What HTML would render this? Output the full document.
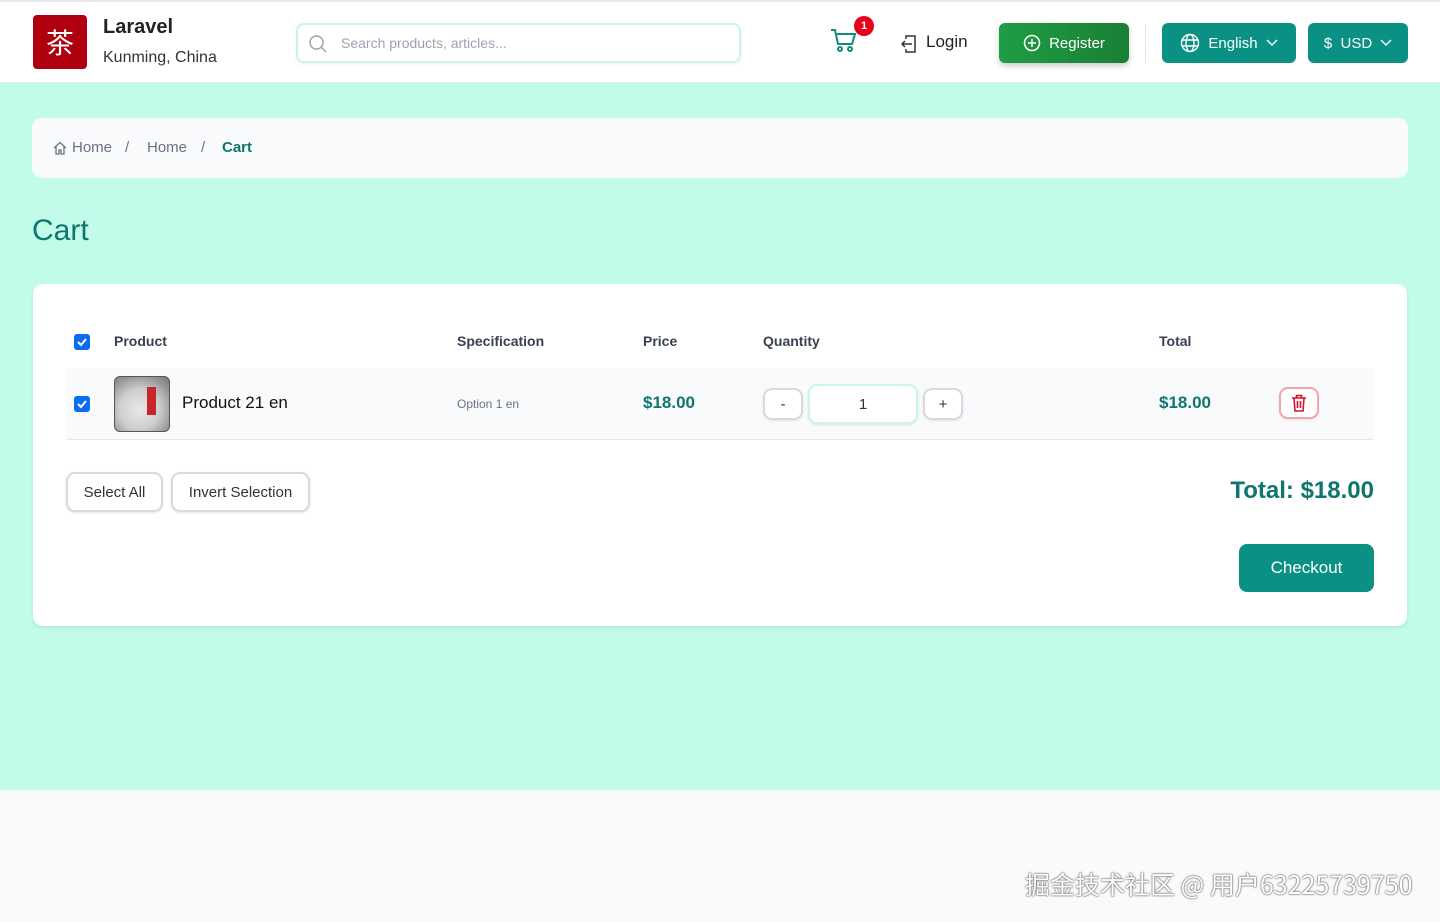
<!DOCTYPE html>
<html><head><meta charset="utf-8"><style>
*{box-sizing:border-box;margin:0;padding:0}
body{width:1440px;height:922px;font-family:"Liberation Sans","DejaVu Sans",sans-serif;background:#f8fafc;position:relative;overflow:hidden;color:#1f2937}
.hdr{position:absolute;top:0;left:0;width:1440px;height:83px;background:#fff;border-top:2px solid #e5e7eb;border-bottom:1px solid #d9f5ee}
.main{position:absolute;top:83px;left:0;width:1440px;height:707px;background:#c3fbeb}
.abs{position:absolute;white-space:nowrap}
.btn{position:absolute;border-radius:6px;color:#fff;font-size:15px;display:flex;align-items:center;justify-content:center;gap:8px}
.card{position:absolute;left:33px;top:284px;width:1374px;height:342px;background:#fff;border-radius:10px;box-shadow:0 2px 4px rgba(0,0,0,.08)}
.th{position:absolute;top:333px;font-size:14px;font-weight:bold;color:#374151}
.cb{position:absolute;width:16px;height:16px;background:#0a6cf2;border-radius:3px}
.cb svg{position:absolute;left:2px;top:2px}
.wb{position:absolute;background:#fff;border:2px solid #d8dadd;border-radius:9px;font-size:15px;display:flex;align-items:center;justify-content:center;color:#333;box-shadow:0 1px 2px rgba(0,0,0,.1)}
</style></head><body>
<div class="hdr">
 <div class="abs" style="left:33px;top:13px;width:54px;height:54px;background:#b00010;border-radius:4px;color:#fff;font-size:28px;font-family:'Noto Sans CJK SC',sans-serif;display:flex;align-items:center;justify-content:center">茶</div>
 <div class="abs" style="left:103px;top:14px;font-size:20px;font-weight:bold;color:#222">Laravel</div>
 <div class="abs" style="left:103px;top:47px;font-size:16px;color:#333">Kunming, China</div>
 <div class="abs" style="left:296px;top:21px;width:445px;height:40px;border:2px solid #c9f5e8;border-radius:8px;box-shadow:0 1px 3px rgba(0,0,0,.08)">
  <svg class="abs" style="left:10px;top:9px" width="20" height="20" viewBox="0 0 20 20" fill="none" stroke="#9ca3af" stroke-width="1.5"><circle cx="8.5" cy="8.5" r="6.5"/><path d="M13.5 13.5L18 18"/></svg>
  <div class="abs" style="left:43px;top:10px;font-size:14px;color:#9ca3af">Search products, articles...</div>
 </div>
 <svg class="abs" style="left:830px;top:26px" width="28" height="26" viewBox="0 0 28 26" fill="none" stroke="#0f8a7e" stroke-width="2"><path d="M1 2h4l3 14h14l3-10H7"/><circle cx="10" cy="21" r="2"/><circle cx="20" cy="21" r="2"/></svg>
 <div class="abs" style="left:854px;top:14px;width:20px;height:20px;border-radius:50%;background:#e5001c;color:#fff;font-size:11px;font-weight:bold;display:flex;align-items:center;justify-content:center">1</div>
 <svg class="abs" style="left:900px;top:32px" width="18" height="20" viewBox="0 0 18 20" fill="none" stroke="#333" stroke-width="1.5"><path d="M6 5V2h9v16H6v-3"/><path d="M12 10H2m3-3l-3 3 3 3"/></svg>
 <div class="abs" style="left:926px;top:30px;font-size:17px;color:#222">Login</div>
 <div class="btn" style="left:999px;top:21px;width:130px;height:40px;background:linear-gradient(90deg,#1f9d44,#1a7f35);box-shadow:0 3px 6px rgba(0,0,0,.2)"><svg width="18" height="18" viewBox="0 0 18 18" fill="none" stroke="#fff" stroke-width="1.5"><circle cx="9" cy="9" r="7.5"/><path d="M9 5v8M5 9h8"/></svg>Register</div>
 <div class="abs" style="left:1145px;top:22px;width:1px;height:40px;background:#e5e7eb"></div>
 <div class="btn" style="left:1162px;top:21px;width:134px;height:40px;background:#0a9184"><svg width="20" height="20" viewBox="0 0 20 20" fill="none" stroke="#fff" stroke-width="1.4"><circle cx="10" cy="10" r="8.5"/><ellipse cx="10" cy="10" rx="4" ry="8.5"/><path d="M2 7h16M2 13h16"/></svg>English <svg width="12" height="8" viewBox="0 0 12 8" fill="none" stroke="#fff" stroke-width="1.4"><path d="M1 1l5 5 5-5"/></svg></div>
 <div class="btn" style="left:1308px;top:21px;width:100px;height:40px;background:#0a9184">$&nbsp; USD <svg width="12" height="8" viewBox="0 0 12 8" fill="none" stroke="#fff" stroke-width="1.4"><path d="M1 1l5 5 5-5"/></svg></div>
</div>
<div class="main">
 <div class="abs" style="left:32px;top:35px;width:1376px;height:60px;background:#f8fafc;border-radius:10px"></div>
 <svg class="abs" style="left:53px;top:58px" width="14" height="14" viewBox="0 0 14 14" fill="none" stroke="#6b7280" stroke-width="1.3"><path d="M1 7L7 1.5 13 7M3 5.5V13h3V9h2v4h3V5.5"/></svg>
 <div class="abs" style="left:72px;top:56px;font-size:15px;color:#6b7280">Home</div>
 <div class="abs" style="left:125px;top:56px;font-size:15px;color:#6b7280">/</div>
 <div class="abs" style="left:147px;top:56px;font-size:15px;color:#6b7280">Home</div>
 <div class="abs" style="left:201px;top:56px;font-size:15px;color:#6b7280">/</div>
 <div class="abs" style="left:222px;top:56px;font-size:15px;color:#0f766e;font-weight:bold">Cart</div>
 <div class="abs" style="left:32px;top:131px;font-size:30px;color:#0f766e">Cart</div>
</div>
<div class="card"></div>
<div class="cb" style="left:74px;top:334px"><svg width="12" height="12" viewBox="0 0 12 12" fill="none" stroke="#fff" stroke-width="2"><path d="M2 6l3 3 5-6"/></svg></div>
<div class="th" style="left:114px">Product</div>
<div class="th" style="left:457px">Specification</div>
<div class="th" style="left:643px">Price</div>
<div class="th" style="left:763px">Quantity</div>
<div class="th" style="left:1159px">Total</div>
<div class="abs" style="left:66px;top:368px;width:1308px;height:72px;background:#f8fafc;border-bottom:1px solid #e5e7eb"></div>
<div class="cb" style="left:74px;top:396px"><svg width="12" height="12" viewBox="0 0 12 12" fill="none" stroke="#fff" stroke-width="2"><path d="M2 6l3 3 5-6"/></svg></div>
<div class="abs" style="left:114px;top:376px;width:56px;height:56px;border-radius:6px;border:1px solid #555;background:radial-gradient(circle at 45% 60%,#e8e8e8 0,#cfcfcf 45%,#9a9a9a 75%,#777 100%)"><div class="abs" style="left:32px;top:10px;width:9px;height:28px;background:#c8262a"></div></div>
<div class="abs" style="left:182px;top:393px;font-size:17px;color:#111">Product 21 en</div>
<div class="abs" style="left:457px;top:397px;font-size:12px;color:#6b7280">Option 1 en</div>
<div class="abs" style="left:643px;top:393px;font-size:17px;font-weight:bold;color:#0f766e">$18.00</div>
<div class="wb" style="left:763px;top:388px;width:40px;height:32px">-</div>
<div class="wb" style="left:808px;top:384px;width:110px;height:40px;border-color:#cbf5e9">1</div>
<div class="wb" style="left:923px;top:388px;width:40px;height:32px">+</div>
<div class="abs" style="left:1159px;top:393px;font-size:17px;font-weight:bold;color:#0f766e">$18.00</div>
<div class="wb" style="left:1279px;top:387px;width:40px;height:32px;border-color:#f3a6ad"><svg width="16" height="18" viewBox="0 0 16 18" fill="none" stroke="#d3132c" stroke-width="1.6"><path d="M1 4h14M5.5 4V1.5h5V4M3 4l1 13h8l1-13M6.5 7v7M9.5 7v7"/></svg></div>
<div class="wb" style="left:66px;top:472px;width:97px;height:40px">Select All</div>
<div class="wb" style="left:171px;top:472px;width:139px;height:40px">Invert Selection</div>
<div class="abs" style="left:1174px;top:477px;font-size:24px;font-weight:bold;color:#0f766e;width:200px;text-align:right">Total: $18.00</div>
<div class="btn" style="left:1239px;top:544px;width:135px;height:48px;background:#0a9184;border-radius:8px;font-size:17px">Checkout</div>
<div class="abs" style="left:1025px;top:866px;font-size:25px;color:#fff;font-family:'Noto Sans CJK SC',sans-serif;text-shadow:0 0 2px #555,0 0 1px #333;white-space:nowrap">掘金技术社区 @ 用户63225739750</div>
</body></html>
